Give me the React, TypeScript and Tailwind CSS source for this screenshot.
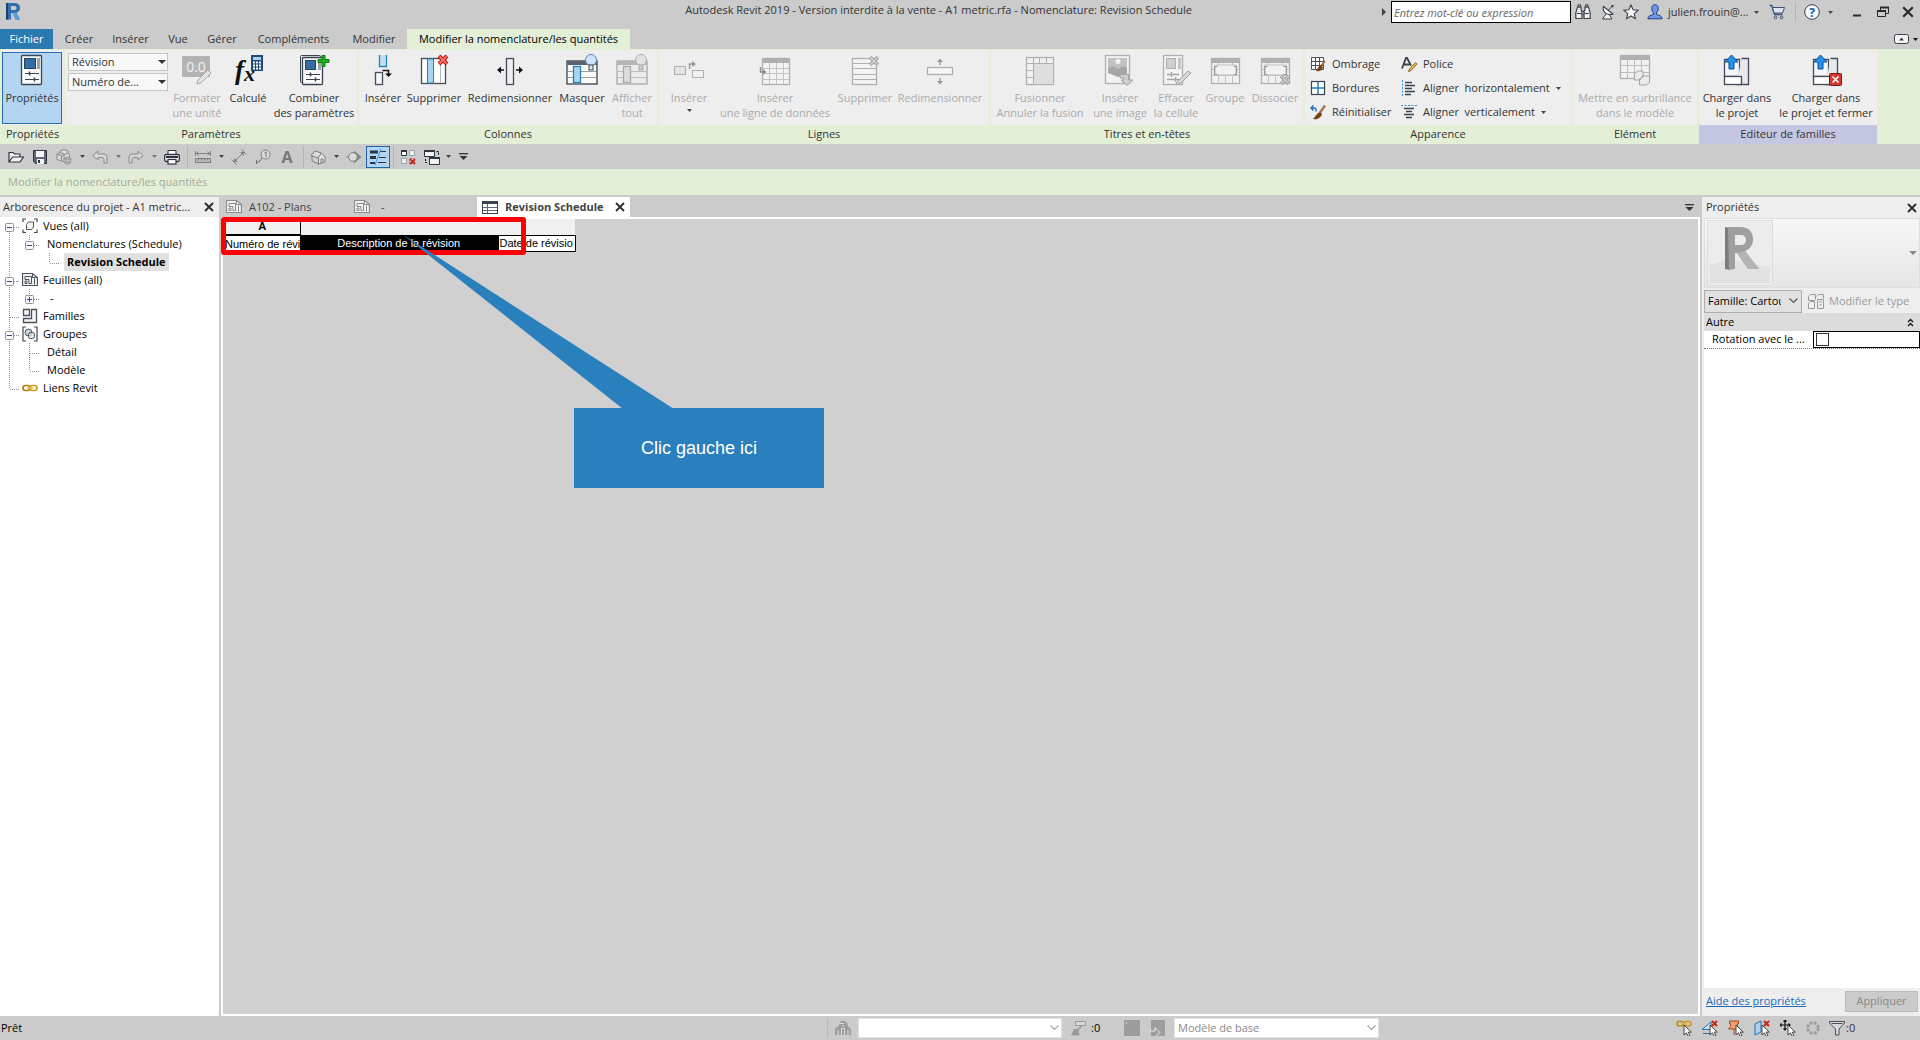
import React, { useState } from 'react';

type IconProps = { w?: number; h?: number; children: React.ReactNode };

const Svg = ({ w = 16, h = 16, children }: IconProps) => (
  <svg width={w} height={h} viewBox={`0 0 ${w} ${h}`} fill="none" className="shrink-0" aria-hidden="true">
    {children}
  </svg>
);

const Caret = ({ color = '#444' }: { color?: string }) => (
  <Svg w={5} h={3}>
    <path d="M0 0h5L2.5 3z" fill={color} />
  </Svg>
);

const Cross = ({ size = 10 }: { size?: number }) => (
  <svg width={size} height={size} viewBox="0 0 10 10" fill="none" className="shrink-0" aria-hidden="true">
    <path d="M1 1l8 8M9 1L1 9" stroke="#2b2b2b" strokeWidth="1.8" />
  </svg>
);

const Chevron = ({ color = '#555' }: { color?: string }) => (
  <Svg w={9} h={6}>
    <path d="M.5 .5l4 4 4-4" stroke={color} strokeWidth="1.2" />
  </Svg>
);

const CursorArrow = () => (
  <path d="M8 5v10l2.4-2.2 1.7 3.6 1.8-.9-1.7-3.4h3.1z" fill="#fff" stroke="#333" strokeWidth=".9" />
);

const RedX = ({ x = 10, y = 0 }: { x?: number; y?: number }) => (
  <path d={`M${x} ${y + 1}l5 5M${x + 5} ${y + 1}l-5 5`} stroke="#c9281c" strokeWidth="2" />
);

const RevitLogo = () => (
  <Svg w={16} h={20}>
    <path d="M1 1h3v16l-3 1z" fill="#1b3f66" />
    <path d="M3 1h6c4 0 6 2 6 5 0 2.500-1.500 4-3.500 4.600L15 18h-4l-3.500-7H6v6.500H3z" fill="#2f6fb0" />
    <path d="M6 4v4h2.500c2 0 3-.6 3-2s-1-2-3-2z" fill="#cbcbcb" />
    <path d="M7.500 11l3.500 7h4l-3.500-7.400z" fill="#58a3d4" />
  </Svg>
);

/* ---------- icônes du ruban ---------- */

const sheetPage = (
  <>
    <rect x="5.500" y="1.500" width="20" height="29" rx="1" fill="#fafafa" stroke="#3a4350" strokeWidth="1.300" />
    <rect x="8.500" y="4.500" width="11" height="10" fill="#356da3" stroke="#1f4468" />
    <rect x="21" y="4" width="3" height="11" fill="#9aa2aa" />
    <path d="M9 19.500h14M9 25.500h14" stroke="#3a4350" strokeWidth="1.200" />
    <path d="M13.500 17.500v4M18.500 23.500v4" stroke="#3a4350" strokeWidth="1.500" />
  </>
);

const IconProprietes = () => <Svg w={32} h={32}>{sheetPage}</Svg>;

const IconFormater = () => (
  <Svg w={32} h={32}>
    <rect x="1" y="2" width="28" height="21" fill="#b3b3b3" />
    <text x="15" y="18" fontSize="14" fill="#f2f2f2" textAnchor="middle" fontFamily="Open Sans">0.0</text>
    <path d="M17 26l10-10 3 3-10 10-4 1z" fill="#e3e3e3" stroke="#a9a9a9" />
  </Svg>
);

const IconCalcule = () => (
  <Svg w={32} h={32}>
    <text x="3" y="25" fontSize="27" fontStyle="italic" fontWeight="bold" fill="#111" fontFamily="Liberation Serif">f</text>
    <text x="12" y="27" fontSize="22" fontStyle="italic" fontWeight="bold" fill="#111" fontFamily="Liberation Serif">x</text>
    <rect x="19" y="1" width="12" height="16" fill="#1f4d78" />
    <rect x="21" y="3" width="8" height="3" fill="#a9d3ea" />
    <path d="M21 8.500h8M21 11.500h8M21 14.500h8" stroke="#fff" strokeWidth="2" strokeDasharray="2 1" />
  </Svg>
);

const IconCombiner = () => (
  <Svg w={32} h={32}>
    <rect x="2.500" y="1.500" width="20" height="27" rx="1" fill="#eee" stroke="#3a4350" />
    <rect x="4.500" y="3.500" width="20" height="27" rx="1" fill="#fafafa" stroke="#3a4350" strokeWidth="1.300" />
    <rect x="7.500" y="6.500" width="10" height="9" fill="#356da3" stroke="#1f4468" />
    <rect x="20" y="9" width="3" height="7" fill="#9aa2aa" />
    <path d="M8 20.500h14M8 25.500h14" stroke="#3a4350" strokeWidth="1.200" />
    <path d="M12.500 18.500v4M17.500 23.500v4" stroke="#3a4350" strokeWidth="1.500" />
    <path d="M24 1.500h3v4h4v3h-4v4h-3v-4h-4v-3h4z" fill="#19b11c" stroke="#0c7a10" />
  </Svg>
);

const IconInsererCol = () => (
  <Svg w={32} h={32}>
    <path d="M12.500 1v11h7V1z" fill="#bfe1f2" />
    <path d="M12.500 1v11.500h7V1" stroke="#2f7fb5" strokeWidth="1.300" />
    <rect x="8.500" y="18.500" width="7" height="12" fill="#f7f7f7" stroke="#444c57" strokeWidth="1.300" />
    <path d="M15.500 16.500h6v4" stroke="#111" strokeWidth="1.600" />
    <path d="M18 19.500h7L21.500 23z" fill="#111" />
  </Svg>
);

const IconSupprimerCol = () => (
  <Svg w={32} h={32}>
    <rect x="3.500" y="4.500" width="24" height="25" fill="#fff" stroke="#444c57" strokeWidth="1.300" />
    <path d="M22.500 5v24" stroke="#b5b9be" />
    <rect x="9.500" y="5" width="6" height="24" fill="#a9d6ef" stroke="#2f7fb5" />
    <path d="M21 2l8 8M29 2l-8 8" stroke="#a31a12" strokeWidth="4" />
    <path d="M21.500 2.500l7 7M28.500 2.500l-7 7" stroke="#ff6a5e" strokeWidth="2.400" />
  </Svg>
);

const IconRedimCol = () => (
  <Svg w={32} h={32}>
    <rect x="12.500" y="4.500" width="7" height="26" fill="#eef0f2" stroke="#444c57" strokeWidth="1.300" />
    <path d="M5 16h5M22 16h5" stroke="#111" strokeWidth="1.600" />
    <path d="M7 12.500v7L3 16zM25 12.500v7l4-3.500z" fill="#111" />
  </Svg>
);

const HideTable = ({ off = false }: { off?: boolean }) => {
  const line = off ? '#aaa' : '#39424e';
  return (
    <Svg w={32} h={32}>
      <rect x="1" y="7" width="30" height="23" fill={off ? '#ececec' : '#fafafa'} stroke={line} strokeWidth="1.300" />
      <rect x="1" y="7" width="30" height="4" fill={off ? '#b5b5b5' : '#5b6470'} />
      <path d="M2 17.500h28M2 23.500h28" stroke={off ? '#bdbdbd' : '#9aa1a9'} />
      <rect x="7.500" y="12.500" width="7" height="16" fill={off ? '#ddd' : '#a9d6ef'} stroke={off ? '#aaa' : '#2f7fb5'} strokeWidth="1.300" />
      <circle cx="25" cy="6" r="5.500" fill={off ? '#e2e2e2' : '#cfe3fb'} stroke={off ? '#b0b0b0' : '#5d86c0'} />
      <rect x="23" y="11" width="4" height="5" fill={off ? '#ccc' : '#e8e8e8'} stroke={off ? '#aaa' : '#39424e'} />
    </Svg>
  );
};

const G = '#b0b0b0';

const IconInsererLigne = () => (
  <Svg w={32} h={32}>
    <rect x="1.500" y="12.500" width="11" height="8" fill="#e3e3e3" stroke={G} />
    <rect x="19.500" y="16.500" width="11" height="7" fill="#f2f2f2" stroke={G} />
    <path d="M16.500 15v-5h4" stroke="#999" strokeWidth="1.400" />
    <path d="M19 7v6l4-3z" fill="#999" />
  </Svg>
);

const gridBody = (
  <>
    <rect x="3.500" y="4.500" width="27" height="26" fill="#f3f3f3" stroke={G} strokeWidth="1.300" />
    <rect x="3" y="5" width="28" height="4" fill={G} />
    <path d="M10.500 9v21M17.500 9v21M24.500 9v21M4 14.500h26M4 19.500h26M4 25.500h26" stroke="#c4c4c4" />
  </>
);

const IconInsererDonnees = () => (
  <Svg w={32} h={32}>
    {gridBody}
    <path d="M1.500 13v5h4" stroke="#8d8d8d" strokeWidth="1.400" />
    <path d="M4 15v6l3.500-3z" fill="#8d8d8d" />
  </Svg>
);

const IconSupprimerLigne = () => (
  <Svg w={32} h={32}>
    <rect x="3.500" y="4.500" width="24" height="26" fill="#f3f3f3" stroke={G} strokeWidth="1.300" />
    <path d="M4 9.500h23M4 14.500h23M4 20.500h23M4 25.500h23" stroke={G} />
    <path d="M21 3l8 8M29 3l-8 8" stroke="#a6a6a6" strokeWidth="3.600" />
    <path d="M21 3l8 8M29 3l-8 8" stroke="#d0d0d0" strokeWidth="1.500" />
  </Svg>
);

const IconRedimLigne = () => (
  <Svg w={32} h={32}>
    <rect x="3.500" y="13.500" width="25" height="7" fill="#f5f5f5" stroke={G} strokeWidth="1.300" />
    <path d="M16 6v5M16 24v5" stroke="#999" strokeWidth="1.400" />
    <path d="M13 8l3-3.500L19 8zM13 27l3 3.500 3-3.500z" fill="#999" />
  </Svg>
);

const IconFusionner = () => (
  <Svg w={32} h={32}>
    <rect x="2.500" y="3.500" width="27" height="27" fill="#f1f1f1" stroke={G} strokeWidth="1.300" />
    <rect x="9.500" y="9.500" width="20" height="21" fill="#dedede" stroke={G} />
    <path d="M9.500 4v6M15.500 4v6M22.500 4v6M3 9.500h7M3 16.500h7M3 23.500h7" stroke={G} />
  </Svg>
);

const IconImage = () => (
  <Svg w={32} h={32}>
    <rect x="1.500" y="1.500" width="24" height="28" fill="#f3f3f3" stroke={G} strokeWidth="1.300" />
    <rect x="4" y="4" width="19" height="11" fill="#c2c2c2" />
    <circle cx="14" cy="7.500" r="2.500" fill="#f3f3f3" />
    <path d="M4 14l5-2 5 3 5-3 4 2v6l-9 3-10-4z" fill="#a6a6a6" />
    <path d="M16 20.500h8.500V26H29l-6 5.500-6-5.500h3v-2h-4z" fill="#cfcfcf" stroke="#a3a3a3" />
  </Svg>
);

const IconEffacer = () => (
  <Svg w={32} h={32}>
    <rect x="3.500" y="1.500" width="19" height="29" fill="#f3f3f3" stroke={G} strokeWidth="1.300" />
    <rect x="6.500" y="4.500" width="9" height="10" fill="#cecece" stroke={G} />
    <rect x="18" y="4" width="3" height="11" fill="#c4c4c4" />
    <path d="M7 20.500h12M7 25.500h12M11.500 18v5M15.500 23v5" stroke="#a5a5a5" strokeWidth="1.300" />
    <path d="M17 28L28 17l3 2-10 10-5 2z" fill="#d9d9d9" stroke="#9f9f9f" />
  </Svg>
);

const groupBody = (
  <>
    <rect x="2.500" y="4.500" width="28" height="25" fill="#f1f1f1" stroke={G} strokeWidth="1.300" />
    <rect x="2" y="4" width="29" height="5" fill={G} />
    <path d="M3 15.500h27M3 21.500h27M9.500 9v20M23.500 9v20M16.500 20v9" stroke="#c4c4c4" />
    <rect x="6" y="11" width="21" height="10" fill="#f1f1f1" stroke="#c2c2c2" />
    <path d="M8.500 12.500h-3v8h3M24.500 12.500h3v8h-3" stroke="#999" strokeWidth="1.200" />
  </>
);

const IconGroupe = () => <Svg w={32} h={32}>{groupBody}</Svg>;

const IconDissocier = () => (
  <Svg w={32} h={32}>
    {groupBody}
    <path d="M22 22l8 8M30 22l-8 8" stroke="#9c9c9c" strokeWidth="3.600" />
    <path d="M22 22l8 8M30 22l-8 8" stroke="#cdcdcd" strokeWidth="1.500" />
  </Svg>
);

const IconSurbrillance = () => (
  <Svg w={32} h={32}>
    <rect x="1.500" y="1.500" width="29" height="23" fill="#f1f1f1" stroke={G} strokeWidth="1.300" />
    <rect x="1" y="1" width="30" height="5" fill={G} />
    <path d="M2 11.500h28M2 18.500h28M8.500 6v18M15.500 6v18M22.500 6v18" stroke="#bdbdbd" />
    <path d="M15.500 20l3-3h5.500v6l-3 3h-5.500zM20.500 25l3-3h7v6l-3 3h-7z" fill="#ececec" stroke="#a5a5a5" />
  </Svg>
);

const ChargerBody = (
  <>
    <path d="M3.500 5.500h15v17h-15z" fill="#f5f6f8" stroke="#444c57" strokeWidth="1.300" />
    <path d="M20.500 4.500h7v26h-12" stroke="#444c57" strokeWidth="1.300" fill="#e7e9ec" />
    <rect x="3.500" y="22.500" width="17" height="8" fill="#fdfdfd" stroke="#444c57" strokeWidth="1.300" />
    <path d="M10.500 1l6.500 7h-4v7H8V8H4z" fill="#2492ee" stroke="#0e4f93" />
  </>
);

const IconCharger = () => <Svg w={32} h={32}>{ChargerBody}</Svg>;

const IconChargerFermer = () => (
  <Svg w={32} h={32}>
    {ChargerBody}
    <rect x="19.500" y="19.500" width="12" height="12" rx="1" fill="#d23a32" stroke="#7c1712" />
    <path d="M22.500 22.500l6 6M28.500 22.500l-6 6" stroke="#fff" strokeWidth="1.500" />
  </Svg>
);

const IconOmbrage = () => (
  <Svg>
    <path d="M1.500 1.500h12v12h-12zM1.500 5.500h12M1.500 9.500h12M5.500 1.500v12M9.500 1.500v12" fill="#fff" stroke="#4c545e" />
    <path d="M15 5l-4 5" stroke="#b36a2c" strokeWidth="2" />
    <path d="M11 9c-3 1-3 4-5 6 3 1 6 0 7-4z" fill="#7a4316" />
  </Svg>
);

const IconBordures = () => (
  <Svg>
    <rect x="1.500" y="1.500" width="13" height="13" fill="#fff" stroke="#3a4350" strokeWidth="1.200" />
    <path d="M8 2v12M2 8h12" stroke="#1f7fc8" strokeWidth="1.500" />
  </Svg>
);

const IconReinit = () => (
  <Svg>
    <path d="M1 4h3c2 0 2.500 1.500 2 3.500M3.500 1.500L1 4l2.500 2.500" stroke="#1f6fc0" strokeWidth="1.400" />
    <path d="M15 1.500l-5 7" stroke="#a6744c" strokeWidth="2.400" />
    <path d="M10 8c-3 1-4 4-7 7 4 1 8-1 9-5z" fill="#7a4316" />
  </Svg>
);

const IconPolice = () => (
  <Svg>
    <path d="M1 12.500L5 2h1l4 7.500M2.500 8.500h6" stroke="#39424e" strokeWidth="1.800" />
    <path d="M14.500 6.500l-6 6.500-1 2.500 2.500-1 6-6.500z" fill="#f0b73a" stroke="#7a5214" strokeWidth=".8" />
  </Svg>
);

const IconAlignH = () => (
  <Svg>
    <path d="M1.500 0v16" stroke="#2f8fd8" strokeDasharray="2 1.500" />
    <path d="M4 2.500h7M4 5.500h10M4 8.500h7M4 11.500h10M4 14.500h6" stroke="#3a4350" strokeWidth="1.400" />
  </Svg>
);

const IconAlignV = () => (
  <Svg>
    <path d="M0 1.500h16" stroke="#2f8fd8" strokeDasharray="2 1.500" />
    <path d="M3 4.500h10M5 7.500h6M3 10.500h10M5 13.500h6" stroke="#3a4350" strokeWidth="1.400" />
  </Svg>
);

/* ---------- petites icônes ---------- */

const IconFeuille = ({ color = '#4a525c' }: { color?: string }) => (
  <Svg>
    <path d="M.5 1.500h10l5 4v8H.5z" fill="#f1f2f3" stroke={color} strokeWidth="1.200" />
    <path d="M10.500 1.500v4h5" stroke={color} />
    <path d="M3 4.500h6.500v7H7v-4H3zM3 9h2v2.500H3zM12.500 6.500v6" stroke={color} />
  </Svg>
);

const IconNomenclature = () => (
  <Svg w={16} h={13}>
    <rect x=".5" y=".5" width="15" height="12" fill="#fff" stroke="#3a4350" />
    <rect x="1" y="1" width="14" height="2" fill="#3a4350" />
    <path d="M1 6.500h14M1 9.500h14M5.500 3v9" stroke="#5b6b7c" />
  </Svg>
);

const IconVues = () => (
  <Svg>
    <path d="M4 1H1v3M12 1h3v3M4 14.500H1v-3M12 14.500h3v-3" stroke="#444" strokeWidth="1.200" />
    <path d="M4.500 6.500l2-2.500h5v5l-2 2.500h-5z" fill="#f4f4f4" stroke="#4a525c" />
  </Svg>
);

const IconFamilles = () => (
  <Svg>
    <path d="M1.500 1.500h6v6h-6zM9.500 1.500h5v13h-13v-4h8z" fill="#f5f5f5" stroke="#4a525c" strokeWidth="1.300" />
  </Svg>
);

const IconGroupes = () => (
  <Svg>
    <path d="M4 1H1v14h3M12 1h3v14h-3" stroke="#444" strokeWidth="1.200" />
    <circle cx="6.500" cy="6.500" r="3.500" fill="#cdd3da" stroke="#4a525c" />
    <rect x="6.500" y="6.500" width="6" height="6" rx="2" fill="#d9dee3" fillOpacity=".7" stroke="#4a525c" />
  </Svg>
);

const IconLien = () => (
  <Svg>
    <rect x="1" y="5.500" width="7" height="5" rx="2.500" stroke="#b07a08" strokeWidth="1.600" />
    <rect x="8" y="5.500" width="7" height="5" rx="2.500" stroke="#d39b1c" strokeWidth="1.600" />
    <path d="M5 8h6" stroke="#e6b93c" strokeWidth="1.500" />
  </Svg>
);

/* ---------- barre de titre ---------- */

const TitleBar = () => (
  <header className="flex h-[29px] items-start bg-[#cbcbcb]">
    <div className="pt-0.5 pl-[5px]">
      <RevitLogo />
    </div>
    <h1 className="min-w-0 flex-1 truncate pt-0.5 pr-[190px] text-right leading-4">
      Autodesk Revit 2019 - Version interdite à la vente - A1 metric.rfa - Nomenclature: Revision Schedule
    </h1>
    <div className="flex h-6 items-center">
      <button aria-label="Réduire la recherche" className="w-[9px]">
        <Svg w={4} h={8}>
          <path d="M0 0l4 4-4 4z" fill="#444" />
        </Svg>
      </button>
      <input
        aria-label="Recherche"
        placeholder="Entrez mot-clé ou expression"
        className="h-[22px] w-[180px] border border-black bg-white px-0.5 italic placeholder:text-[#666]"
      />
      <button aria-label="Rechercher" className="flex w-6 justify-center">
        <Svg>
          <path d="M2.500 3h3.500v3l1 1v7.500H.8V9zM13.500 3H10v3L9 7v7.500h6.200V9z" fill="#eee" stroke="#39424e" strokeWidth="1.200" />
          <path d="M3 .8h2.500v2H3zM10.500 .8H13v2h-2.500zM7 7.500h2v3H7z" fill="#ccc" stroke="#39424e" />
          <path d="M2 9.500h4M10 9.500h4" stroke="#39424e" />
        </Svg>
      </button>
      <button aria-label="Communication" className="flex w-[26px] justify-center">
        <Svg>
          <path d="M6 10l-3.500 5H12l-2.500-4" fill="#f3f3f3" stroke="#39424e" />
          <path d="M3.500 2.500c-1.500 5 3 9.500 9.500 7.500z" fill="#f3f3f3" stroke="#39424e" strokeWidth="1.200" />
          <path d="M8.500 6l4-4" stroke="#39424e" />
          <circle cx="12.500" cy="2" r="1.200" fill="#39424e" />
        </Svg>
      </button>
      <button aria-label="Favoris" className="flex w-5 justify-center">
        <Svg>
          <path d="M8 1l2.100 4.700 5 .5-3.800 3.400 1.100 5L8 12l-4.400 2.600 1.100-5L.9 6.200l5-.5z" fill="#f6f6f6" stroke="#39424e" strokeWidth="1.100" />
        </Svg>
      </button>
      <button className="flex w-[122px] items-center gap-[5px] pl-1.5">
        <Svg>
          <path d="M8 .7c2.700 0 3.500 2 3.200 4.500-.2 1.700-1 3-1.700 3.800v1.500c2 .7 5.500 1 5.700 4.300H.8c.2-3.300 3.700-3.600 5.700-4.300V9C5.800 8.200 5 6.900 4.800 5.200 4.500 2.700 5.300 .7 8 .7z" fill="#6f97e6" stroke="#263f86" />
        </Svg>
        <span className="whitespace-nowrap">julien.frouin@...</span>
        <Caret />
      </button>
      <button aria-label="Boutique" className="flex w-7 justify-center">
        <Svg>
          <path d="M.5 1.500h2.300l2.700 9h8" stroke="#3b4f7a" strokeWidth="1.300" />
          <path d="M3.500 3.500h12l-2 5.500H5z" fill="#dfe6f3" stroke="#3b4f7a" />
          <circle cx="6.500" cy="13.500" r="1.300" stroke="#3b4f7a" />
          <circle cx="12.500" cy="13.500" r="1.300" stroke="#3b4f7a" />
        </Svg>
      </button>
      <span className="mr-1 ml-1 h-5 w-px bg-[#b5b5b5]" />
      <button aria-label="Aide" className="flex w-[38px] items-center gap-2 pl-1">
        <Svg>
          <circle cx="8" cy="8" r="7.300" fill="#f4f7fb" stroke="#39424e" />
          <text x="8" y="12.500" textAnchor="middle" fontSize="12" fontWeight="bold" fontFamily="Open Sans" fill="#2259b5">?</text>
        </Svg>
        <Caret />
      </button>
      <button aria-label="Réduire" className="ml-1.5 flex w-[26px] justify-center">
        <Svg w={10} h={10}>
          <path d="M1 8.500h8" stroke="#2b2b2b" strokeWidth="2" />
        </Svg>
      </button>
      <button aria-label="Restaurer" className="flex w-[26px] justify-center">
        <Svg w={12} h={12}>
          <path d="M3.500 4V1.500h8v6H9M.5 5.500h8v5h-8z" stroke="#2b2b2b" />
          <path d="M3 1.500h9M0 5h9" stroke="#2b2b2b" strokeWidth="2" />
        </Svg>
      </button>
      <button aria-label="Fermer" className="flex w-6 justify-center">
        <Cross size={12} />
      </button>
    </div>
  </header>
);

const onglets = [
  { label: 'Créer', cls: 'w-[48px]' },
  { label: 'Insérer', cls: 'w-[55px]' },
  { label: 'Vue', cls: 'w-[40px]' },
  { label: 'Gérer', cls: 'w-[48px]' },
  { label: 'Compléments', cls: 'w-[95px]' },
  { label: 'Modifier', cls: 'w-[66px]' },
];

const TabBar = () => (
  <nav className="flex h-5 items-stretch bg-[#cbcbcb]">
    <button className="mr-0.5 w-[53px] bg-[#2a7ab0] text-white">Fichier</button>
    {onglets.map((o) => (
      <button key={o.label} className={o.cls}>{o.label}</button>
    ))}
    <button className="w-[223px] bg-[#e4efd8] whitespace-nowrap text-black">Modifier la nomenclature/les quantités</button>
    <button aria-label="Réduire le ruban" className="ml-auto flex items-center gap-1 pr-0.5">
      <Svg w={15} h={10}>
        <rect x=".5" y=".5" width="14" height="9" rx="2" fill="#f4f4f4" stroke="#39424e" />
        <path d="M5 6.500h5L7.500 3.500z" fill="#39424e" />
      </Svg>
      <Caret color="#111" />
    </button>
  </nav>
);

/* ---------- ruban ---------- */

type RibbonButtonProps = {
  icon: React.ReactNode;
  label: string;
  label2?: string;
  cls: string;
  disabled?: boolean;
  menu?: boolean;
};

const RibbonButton = ({ icon, label, label2, cls, disabled, menu }: RibbonButtonProps) => (
  <button
    disabled={disabled}
    className={`flex shrink-0 flex-col items-center pt-1 leading-[15px] whitespace-nowrap ${cls} ${disabled ? 'text-[#ababab]' : 'text-[#333]'}`}
  >
    {icon}
    <span className="mt-1">{label}</span>
    {label2 && <span>{label2}</span>}
    {menu && <span className="pt-1"><Caret /></span>}
  </button>
);

const Panel = ({ title, cls, titleCls = 'bg-[#e4efd8]', children }: { title: string; cls: string; titleCls?: string; children: React.ReactNode }) => (
  <section className={`mr-0.5 flex shrink-0 flex-col ${cls}`}>
    <div className="flex h-[75px] bg-[#eee]">{children}</div>
    <h2 className={`h-[19px] text-center leading-[17px] ${titleCls}`}>{title}</h2>
  </section>
);

const RibbonSelect = ({ label, value }: { label: string; value: string }) => (
  <div className="relative">
    <select aria-label={label} className="h-[18px] w-full appearance-none border border-[#c6c6c6] bg-[#f8f8f8] pl-[3px] leading-4">
      <option>{value}</option>
    </select>
    <span className="pointer-events-none absolute top-[7px] right-0.5">
      <Svg w={8} h={4}>
        <path d="M0 0h8L4 4z" fill="#333" />
      </Svg>
    </span>
  </div>
);

const SmallButton = ({ icon, label, menu }: { icon: React.ReactNode; label: string; menu?: boolean }) => (
  <button className="flex h-6 items-center gap-1.5 whitespace-nowrap">
    {icon}
    <span className="whitespace-pre">{label}</span>
    {menu && <Caret />}
  </button>
);

const Ribbon = () => (
  <div className="flex h-[95px] overflow-hidden border-t border-[#e4efd8] bg-[#e4efd8] pl-0.5 text-[#333]">
    <Panel title="Propriétés" cls="w-[61px]">
      <button className="mr-px mt-0.5 flex h-[72px] flex-1 flex-col items-center border border-[#2a6fb5] bg-[#b4d5f2] pt-px leading-[15px]">
        <IconProprietes />
        <span className="mt-1">Propriétés</span>
      </button>
    </Panel>
    <Panel title="Paramètres" cls="w-[292px]">
      <div className="ml-[3px] flex w-[100px] flex-col gap-0.5 pt-[3px]">
        <RibbonSelect label="Catégorie" value="Révision" />
        <RibbonSelect label="Champ" value="Numéro de..." />
      </div>
      <RibbonButton disabled icon={<IconFormater />} label="Formater" label2="une unité" cls="ml-[3px] w-[52px]" />
      <RibbonButton icon={<IconCalcule />} label="Calculé" cls="w-[50px]" />
      <RibbonButton icon={<IconCombiner />} label="Combiner" label2="des paramètres" cls="w-[82px]" />
    </Panel>
    <Panel title="Colonnes" cls="w-[298px]">
      <RibbonButton icon={<IconInsererCol />} label="Insérer" cls="ml-1 w-[40px]" />
      <RibbonButton icon={<IconSupprimerCol />} label="Supprimer" cls="w-[62px]" />
      <RibbonButton icon={<IconRedimCol />} label="Redimensionner" cls="w-[90px]" />
      <RibbonButton icon={<HideTable />} label="Masquer" cls="w-[54px]" />
      <RibbonButton disabled icon={<HideTable off />} label="Afficher" label2="tout" cls="w-[46px]" />
    </Panel>
    <Panel title="Lignes" cls="w-[330px]">
      <RibbonButton disabled menu icon={<IconInsererLigne />} label="Insérer" cls="ml-[7px] w-[46px]" />
      <RibbonButton disabled icon={<IconInsererDonnees />} label="Insérer" label2="une ligne de données" cls="w-[126px]" />
      <RibbonButton disabled icon={<IconSupprimerLigne />} label="Supprimer" cls="w-[54px]" />
      <RibbonButton disabled icon={<IconRedimLigne />} label="Redimensionner" cls="w-[96px]" />
    </Panel>
    <Panel title="Titres et en-têtes" cls="w-[312px]">
      <RibbonButton disabled icon={<IconFusionner />} label="Fusionner" label2="Annuler la fusion" cls="w-[98px]" />
      <RibbonButton disabled icon={<IconImage />} label="Insérer" label2="une image" cls="w-[62px]" />
      <RibbonButton disabled icon={<IconEffacer />} label="Effacer" label2="la cellule" cls="w-[50px]" />
      <RibbonButton disabled icon={<IconGroupe />} label="Groupe" cls="w-[48px]" />
      <RibbonButton disabled icon={<IconDissocier />} label="Dissocier" cls="w-[52px]" />
    </Panel>
    <Panel title="Apparence" cls="w-[266px]">
      <div className="flex w-[90px] flex-col pt-0.5 pl-[5px]">
        <SmallButton icon={<IconOmbrage />} label="Ombrage" />
        <SmallButton icon={<IconBordures />} label="Bordures" />
        <SmallButton icon={<IconReinit />} label="Réinitialiser" />
      </div>
      <div className="flex flex-col pt-0.5 pl-1.5">
        <SmallButton icon={<IconPolice />} label="Police" />
        <SmallButton menu icon={<IconAlignH />} label="Aligner  horizontalement" />
        <SmallButton menu icon={<IconAlignV />} label="Aligner  verticalement" />
      </div>
    </Panel>
    <Panel title="Elément" cls="w-[124px]">
      <RibbonButton disabled icon={<IconSurbrillance />} label="Mettre en surbrillance" label2="dans le modèle" cls="w-[124px]" />
    </Panel>
    <Panel title="Editeur de familles" cls="w-[178px]" titleCls="bg-[#c5c6e2]">
      <RibbonButton icon={<IconCharger />} label="Charger dans" label2="le projet" cls="w-[76px]" />
      <RibbonButton icon={<IconChargerFermer />} label="Charger dans" label2="le projet et fermer" cls="w-[102px]" />
    </Panel>
  </div>
);

/* ---------- barre d'accès rapide ---------- */

const Tool = ({ label, cls = 'w-6', children }: { label: string; cls?: string; children: React.ReactNode }) => (
  <button aria-label={label} title={label} className={`flex h-[22px] shrink-0 items-center justify-center ${cls}`}>
    {children}
  </button>
);

const Sep = () => <span className="h-[22px] w-px shrink-0 bg-[#b3b3b3]" />;

const QuickAccess = () => (
  <div className="flex h-[25px] items-center bg-[#cbcbcb] pl-1">
    <Tool label="Ouvrir">
      <Svg>
        <path d="M1 13V3.500h4l1.500 1.500H12v3M1 13L4.500 8H15.500L12 13z" fill="#f3f3f3" stroke="#2d3540" strokeWidth="1.200" />
      </Svg>
    </Tool>
    <Tool label="Enregistrer">
      <Svg>
        <path d="M1.500 1.500h13v13h-11l-2-2z" fill="#5d6773" stroke="#2d3540" />
        <rect x="4" y="2" width="8" height="6" fill="#f5f5f5" />
        <rect x="5" y="10" width="7" height="5" fill="#f5f5f5" />
        <rect x="6" y="11" width="2" height="3" fill="#2d3540" />
      </Svg>
    </Tool>
    <Tool label="Synchroniser">
      <Svg>
        <path d="M1 5l3-1.500V2l4-1.500 4 1.500v2l1.500 1v5l-5 3-2.500-1L1 10.500zM1 5l4.500 2L12 4M5.500 7v5M8 6v6M4 3.500l4 1.500" fill="#d9d9d9" stroke="#8c8c8c" />
        <circle cx="11.500" cy="11.500" r="4" fill="#9f9f9f" />
        <path d="M8 11.500h7M11.500 8v7" stroke="#c4c4c4" strokeWidth=".8" />
      </Svg>
    </Tool>
    <Tool label="Options de synchronisation" cls="w-3"><Caret /></Tool>
    <Tool label="Annuler">
      <Svg>
        <path d="M.8 6.500L6 2v3h5c3 0 4 1 4 4v5h-3v-3c0-1.500-.5-2.500-2-2.500H6v2.500z" fill="#d6d6d6" stroke="#8c8c8c" />
      </Svg>
    </Tool>
    <Tool label="Liste des annulations" cls="w-3"><Caret color="#777" /></Tool>
    <Tool label="Rétablir">
      <Svg>
        <path d="M15.200 6.500L10 2v3H5C2 5 1 6 1 9v5h3v-3c0-1.500.5-2.500 2-2.500h4v2.500z" fill="#d6d6d6" stroke="#8c8c8c" />
      </Svg>
    </Tool>
    <Tool label="Liste des rétablissements" cls="w-3"><Caret color="#777" /></Tool>
    <Tool label="Imprimer">
      <Svg>
        <path d="M4 6V1.500h8V6" fill="#fff" stroke="#2d3540" />
        <rect x=".7" y="5.500" width="14.600" height="7" rx="1.500" fill="#f0f0f0" stroke="#2d3540" strokeWidth="1.300" />
        <path d="M2 8h12" stroke="#2d3540" strokeWidth="2" />
        <rect x="4" y="10.500" width="8" height="4.500" fill="#fff" stroke="#2d3540" strokeWidth="1.200" />
      </Svg>
    </Tool>
    <span className="w-[3px]" />
    <Sep />
    <Tool label="Mesurer" cls="ml-[3px] w-6">
      <Svg>
        <path d="M1 4.500h14M3.500 2.500l-2 2 2 2M12.500 2.500l2 2-2 2M.5 2v5M15.500 2v5" stroke="#7f7f7f" />
        <path d="M.5 9.500h15v4H.5z" fill="#b9b9b9" stroke="#7f7f7f" />
        <path d="M3.500 9.500v2M6.500 9.500v2M9.500 9.500v2M12.500 9.500v2" stroke="#7f7f7f" />
      </Svg>
    </Tool>
    <Tool label="Options de mesure" cls="w-3"><Caret /></Tool>
    <Tool label="Cote alignée">
      <Svg>
        <path d="M3.500 12.500l9-9M.5 10.500l5 5M10.500 .5l5 5" stroke="#808080" />
        <path d="M3 9v4h4zM13 7V3H9z" fill="#808080" />
      </Svg>
    </Tool>
    <Tool label="Étiquette">
      <Svg>
        <circle cx="10.500" cy="5.500" r="4.500" fill="#d9d9d9" stroke="#808080" />
        <path d="M7 9l-3 4H1M1.500 11v4M9.500 4l1.500-1v5" stroke="#707070" />
      </Svg>
    </Tool>
    <Tool label="Texte">
      <span className="text-base leading-5 font-bold text-[#777]">A</span>
    </Tool>
    <span className="w-1" />
    <Sep />
    <Tool label="Vue 3D par défaut" cls="ml-0.5 w-6">
      <Svg>
        <path d="M2 6v6l6.500 3V8.500z" fill="#d0d0d0" stroke="#7c7c7c" />
        <path d="M1 6.500L5 2l6.500 2L8.500 9z" fill="#dcdcdc" stroke="#7c7c7c" />
        <path d="M8.500 8.500l3-4.500L15 8v5l-6.500 2z" fill="#e4e4e4" stroke="#7c7c7c" />
        <path d="M11 14v-4h2v3.500" stroke="#7c7c7c" />
      </Svg>
    </Tool>
    <Tool label="Options de vue 3D" cls="w-3"><Caret /></Tool>
    <Tool label="Coupe">
      <Svg>
        <path d="M8 1.500L15.500 8 8 14.500z" fill="#858585" />
        <circle cx="7" cy="8" r="4.300" fill="#dcdcdc" stroke="#7c7c7c" />
        <path d="M.5 8h2" stroke="#7c7c7c" />
      </Svg>
    </Tool>
    <Tool label="Lignes fines" cls="w-6 border border-[#1f64a8] bg-[#b4d5f2]">
      <Svg w={18} h={16}>
        <path d="M1 3h8M1 8.500h6" stroke="#2d3540" strokeWidth="3" />
        <path d="M1 14h5" stroke="#2d3540" strokeWidth="2" />
        <path d="M11 2.500h6M10 8.500h7M9 13.500h8" stroke="#2d3540" strokeWidth="1.200" />
        <path d="M12 0L6 16" stroke="#2f8fe8" />
      </Svg>
    </Tool>
    <span className="w-[3px]" />
    <Sep />
    <Tool label="Fermer les fenêtres cachées" cls="ml-0.5 w-6">
      <Svg>
        <path d="M1.500 1.500h5v5h-5z" fill="#fff" stroke="#2d3540" />
        <path d="M9.500 1.500h5v5h-5zM1.500 9.500h5v5h-5zM9.500 9.500h5v5h-5z" fill="#f1f1f1" stroke="#9aa0a8" />
        <path d="M1 2h6" stroke="#2d3540" strokeWidth="2" />
        <RedX x={10} y={9} />
      </Svg>
    </Tool>
    <Tool label="Changer de fenêtre">
      <Svg>
        <path d="M.5 1.500h10v6H.5zM5.500 8.500h10v7h-10z" fill="#f4f4f4" stroke="#2d3540" />
        <path d="M.5 2h10M5.500 9h10" stroke="#2d3540" strokeWidth="2" />
        <path d="M12.500 2.500h2v4M1.500 10v3.500h2.500" stroke="#111" strokeDasharray="2 1" />
      </Svg>
    </Tool>
    <Tool label="Liste des fenêtres" cls="w-2"><Caret /></Tool>
    <Tool label="Personnaliser la barre" cls="w-[22px]">
      <Svg w={9} h={7}>
        <path d="M0 .7h9" stroke="#333" strokeWidth="1.300" />
        <path d="M.5 3h8l-4 4z" fill="#333" />
      </Svg>
    </Tool>
  </div>
);

/* ---------- arborescence ---------- */

type GuideProps = { up?: boolean; down?: boolean; right?: boolean; box?: '+' | '-' };

const Guide = ({ up, down, right, box }: GuideProps) => (
  <Svg w={20} h={18}>
    {up && <path d="M9.500 0v10" stroke="#8f8f8f" strokeDasharray="1 1" />}
    {down && <path d="M9.500 10v8" stroke="#8f8f8f" strokeDasharray="1 1" />}
    {right && <path d="M10 10.500h10" stroke="#8f8f8f" strokeDasharray="1 1" />}
    {box && <rect x="5.500" y="6.500" width="8" height="8" rx="1" fill="#fafafa" stroke="#919191" />}
    {box && <path d="M7 10.500h5" stroke="#2b4a87" />}
    {box === '+' && <path d="M9.500 8v5" stroke="#2b4a87" />}
  </Svg>
);

const arbre: { label: string; guides: GuideProps[]; icon?: React.ReactNode; selected?: boolean }[] = [
  { label: 'Vues (all)', guides: [{ down: true, right: true, box: '-' }], icon: <IconVues /> },
  { label: 'Nomenclatures (Schedule)', guides: [{ up: true, down: true }, { up: true, right: true, box: '-' }] },
  { label: 'Revision Schedule', guides: [{ up: true, down: true }, {}, { up: true, right: true }], selected: true },
  { label: 'Feuilles (all)', guides: [{ up: true, down: true, right: true, box: '-' }], icon: <IconFeuille /> },
  { label: '-', guides: [{ up: true, down: true }, { up: true, right: true, box: '+' }] },
  { label: 'Familles', guides: [{ up: true, down: true, right: true }], icon: <IconFamilles /> },
  { label: 'Groupes', guides: [{ up: true, down: true, right: true, box: '-' }], icon: <IconGroupes /> },
  { label: 'Détail', guides: [{ up: true, down: true }, { up: true, down: true, right: true }] },
  { label: 'Modèle', guides: [{ up: true, down: true }, { up: true, right: true }] },
  { label: 'Liens Revit', guides: [{ up: true, right: true }], icon: <IconLien /> },
];

const ProjectBrowser = () => (
  <aside className="flex w-[219px] shrink-0 flex-col bg-white">
    <div className="flex h-5 items-center justify-between bg-[#eee] pr-[5px] pl-[3px]">
      <span className="text-[#333]">Arborescence du projet - A1 metric...</span>
      <button aria-label="Fermer l'arborescence"><Cross /></button>
    </div>
    <ul className="flex-1">
      {arbre.map((n, i) => (
        <li key={i} className="flex h-[18px] items-center">
          {n.guides.map((g, j) => (
            <Guide key={j} {...g} />
          ))}
          {n.icon && <span className="mr-[5px] ml-0.5">{n.icon}</span>}
          {n.selected ? (
            <span className="ml-1 bg-[#e0e0e0] px-[3px] leading-[18px] font-bold text-black">{n.label}</span>
          ) : (
            <span className={n.icon ? 'text-black' : n.label === '-' ? 'pl-2.5 text-black' : 'pl-[7px] text-black'}>{n.label}</span>
          )}
        </li>
      ))}
    </ul>
  </aside>
);

/* ---------- zone de dessin ---------- */

const DocTabs = () => (
  <div className="flex h-5 items-center text-[#444]">
    <button className="flex h-full w-[133px] items-center gap-[7px] pl-[5px]">
      <IconFeuille color="#8b8b8b" />
      A102 - Plans
    </button>
    <button className="flex h-full w-[123px] items-center gap-[11px]">
      <IconFeuille color="#8b8b8b" />
      -
    </button>
    <div className="flex h-full w-[153px] items-center bg-white pl-[5px] font-bold">
      <button className="flex items-center gap-[7px] whitespace-nowrap">
        <IconNomenclature />
        Revision Schedule
      </button>
      <button aria-label="Fermer l'onglet" className="mr-[5px] ml-auto"><Cross /></button>
    </div>
    <button aria-label="Liste des onglets" className="mr-1.5 ml-auto">
      <Svg w={9} h={7}>
        <path d="M0 .7h9" stroke="#333" strokeWidth="1.300" />
        <path d="M.5 3h8l-4 4z" fill="#333" />
      </Svg>
    </button>
  </div>
);

const ScheduleView = () => (
  <main className="flex min-w-0 flex-1 flex-col pr-0.5 pl-0.5">
    <DocTabs />
    <div className="relative flex-1 border-2 border-white bg-[#d0d0d0]">
      <table className="ml-0.5 w-[350px] table-fixed border-collapse font-['Liberation_Sans',Arial,sans-serif] text-[11px] leading-[14px] text-black">
        <colgroup>
          <col className="w-[75px]" />
          <col className="w-[198px]" />
          <col className="w-[77px]" />
        </colgroup>
        <thead>
          <tr className="h-4 bg-[#f0f0f0]">
            <th className="border-r border-b-2 border-black p-0 align-top font-bold">A</th>
            <th className="p-0" />
            <th className="p-0" />
          </tr>
        </thead>
        <tbody>
          <tr className="h-4">
            <td className="bg-white p-0 whitespace-nowrap">Numéro de révi</td>
            <td className="bg-black p-0 text-center text-white">Description de la révision</td>
            <td className="border border-black bg-white p-0 pl-px whitespace-nowrap">Date de révisio</td>
          </tr>
        </tbody>
      </table>

      {/* repères posés par-dessus la vue */}
      <div className="absolute -top-0.5 -left-0.5 h-[38px] w-[305px] rounded-[3px] border-[5px] border-[#f00]" />
      <svg className="absolute top-[15px] left-[179px]" width="272" height="175" viewBox="0 0 272 175" aria-hidden="true">
        <path d="M0 0l221 175h51z" fill="#2a80bc" />
      </svg>
      <div className="absolute top-[189px] left-[351px] flex h-20 w-[250px] items-center justify-center bg-[#2a80bc] font-['Liberation_Sans',Arial,sans-serif] text-lg text-white">
        Clic gauche ici
      </div>
    </div>
  </main>
);

/* ---------- palette des propriétés ---------- */

const PropertiesPalette = () => {
  const [rotation, setRotation] = useState(false);

  return (
    <aside className="flex w-[218px] shrink-0 flex-col bg-[#eee] pl-0.5 text-[#333]">
      <div className="flex h-[21px] items-center justify-between pr-[3px] pl-0.5">
        <span>Propriétés</span>
        <button aria-label="Fermer les propriétés"><Cross /></button>
      </div>
      <div className="flex h-[70px] items-center justify-between border border-[#dedede] bg-linear-to-b from-[#f7f7f7] to-[#e6e6e6] px-0.5">
        <div className="flex h-[66px] w-[66px] items-center justify-center border border-[#dcdcdc] bg-[#ececec]">
          <Svg w={60} h={60}>
            <path d="M0 42l18-6 42 8v16H0z" fill="#e2e2e2" />
            <path d="M15 4l5 1v42l-5-1z" fill="#7d7d7d" />
            <path d="M18 4h12c9 0 13 5 13 12 0 6-3 10-8 12l14 18H38L27 30h-2v16l-6 1z" fill="#9f9f9f" />
            <path d="M25 12v10h5c4 0 6-2 6-5s-2-5-6-5z" fill="#ededed" />
            <path d="M27 30l11 16h11L35 28z" fill="#b4b4b4" />
          </Svg>
        </div>
        <Svg w={8} h={4}>
          <path d="M0 0h8L4 4z" fill="#888" />
        </Svg>
      </div>
      <div className="mt-px flex h-6 items-center">
        <div className="relative">
          <select aria-label="Type de famille" className="h-[23px] w-[98px] appearance-none overflow-hidden border border-[#adadad] bg-[#e1e1e1] pr-5 pl-[3px] text-black">
            <option>Famille: Cartouches</option>
          </select>
          <span className="pointer-events-none absolute top-2 right-1 leading-none"><Chevron /></span>
        </div>
        <button disabled className="ml-1.5 flex items-center gap-[5px] whitespace-nowrap text-[#9b9b9b]">
          <Svg>
            <path d="M.5 3.500l2-2h5v5l-1 1h-6zM8.500 3.500l2-2h5v4M.5 10.500l2-2h4v7h-6zM9.500 6.500h6v9h-6zM11 9h3M11 12h3" fill="#eee" stroke="#9b9b9b" />
          </Svg>
          Modifier le type
        </button>
      </div>
      <div className="flex h-[18px] items-center justify-between bg-[#dcdcdc] pr-1.5 pl-0.5 text-black">
        <span>Autre</span>
        <Svg w={7} h={9}>
          <path d="M1 4l2.500-2.500L6 4M1 8l2.500-2.500L6 8" stroke="#111" strokeWidth="1.300" />
        </Svg>
      </div>
      <div className="flex h-[18px] items-center border-b border-dotted border-[#777] bg-white text-black">
        <label htmlFor="rotation" className="w-[109px] pl-2 whitespace-nowrap">Rotation avec le ...</label>
        <div className="flex h-[17px] flex-1 items-center border border-black pl-0.5">
          <input
            id="rotation"
            type="checkbox"
            checked={rotation}
            onChange={(e) => setRotation(e.target.checked)}
            className="size-[13px] appearance-none border border-[#333] bg-white checked:bg-[#333]"
          />
        </div>
      </div>
      <div className="flex-1 bg-white" />
      <div className="flex h-7 items-center justify-between pr-0.5 pb-0.5 pl-0.5">
        <a href="#aide" className="text-[#1a6ab8] underline">Aide des propriétés</a>
        <button disabled className="h-[21px] w-[73px] border border-[#bcbcbc] bg-[#cbcbcb] text-[#888]">Appliquer</button>
      </div>
    </aside>
  );
};

/* ---------- barre d'état ---------- */

const StatusSelect = ({ label, value, cls }: { label: string; value: string; cls: string }) => (
  <div className={`relative ${cls}`}>
    <select disabled aria-label={label} className="h-5 w-full appearance-none border border-[#e2e2e2] bg-white pl-[3px] text-[#8a8a8a] opacity-100">
      <option>{value}</option>
    </select>
    <span className="pointer-events-none absolute top-[7px] right-[3px]"><Chevron color="#a5a5a5" /></span>
  </div>
);

const StatusBar = () => (
  <footer className="flex h-6 items-center bg-[#cbcbcb] pl-px">
    <span className="w-[826px] text-black">Prêt</span>
    <span className="h-5 w-px bg-[#bababa]" />
    <Tool label="Sous-projets" cls="mx-[3px] w-6">
      <Svg>
        <path d="M4 4.500L6 1h4l2.500 2.500V8H4z" fill="#9d9d9d" />
        <path d="M0 15V9l3-3 3.500 2v7zM9 15V8l3-2.500L16 9v6zM6 9h3v6H6z" fill="#9d9d9d" />
        <path d="M3 10v5M6.500 8v7M9.500 8v7M13 10v5M5 3.500h4M8 5v2" stroke="#eee" strokeWidth=".8" />
      </Svg>
    </Tool>
    <StatusSelect label="Sous-projet actif" value="" cls="w-[204px]" />
    <button className="ml-[9px] flex w-[49px] items-center gap-1 text-black">
      <Svg>
        <path d="M4.500 1.500h10v4h-10z" fill="#d9d9d9" stroke="#999" />
        <path d="M10.500 6L7 10" stroke="#999" strokeWidth="1.500" />
        <path d="M0 15.500L3 9h4l1.500 6.500z" fill="#999" />
      </Svg>
      :0
    </button>
    <Tool label="Variantes">
      <Svg>
        <rect x="0" y="0" width="16" height="16" rx="1" fill="#9d9d9d" />
        <path d="M2 3h1" stroke="#eee" />
      </Svg>
    </Tool>
    <Tool label="Sélectionner la variante" cls="mr-1 ml-0.5 w-6">
      <Svg>
        <path d="M1 0h14v16H1z" fill="#9d9d9d" />
        <path d="M0 11h5V7.500l5 5-4 3.500" fill="#9d9d9d" stroke="#eee" />
      </Svg>
    </Tool>
    <StatusSelect label="Variante active" value="Modèle de base" cls="w-[205px]" />
    <div className="ml-auto flex items-center pr-[53px]">
      <Tool label="Sélectionner les liens" cls="w-[26px]">
        <Svg>
          <rect x="1" y="1.500" width="6.500" height="4.500" rx="2.200" stroke="#c08a10" strokeWidth="1.500" />
          <rect x="8.500" y="1.500" width="6.500" height="4.500" rx="2.200" stroke="#d39b1c" strokeWidth="1.500" />
          <path d="M5 3.700h6" stroke="#e6b93c" strokeWidth="1.300" />
          <CursorArrow />
        </Svg>
      </Tool>
      <Tool label="Sélectionner les éléments du fond de plan" cls="w-[26px]">
        <Svg>
          <path d="M0 9.500L9 2v7.500zM1 13.500h8" fill="#cfe3f5" stroke="#2f6fb0" />
          <RedX x={10} y={0} />
          <CursorArrow />
        </Svg>
      </Tool>
      <Tool label="Sélectionner les éléments verrouillés" cls="w-[26px]">
        <Svg>
          <path d="M1.500 1h9v2.500h-1v3l2 2.500H.5l2-2.500v-3h-1zM6 9v6" fill="#f0a070" stroke="#a34a18" />
          <CursorArrow />
        </Svg>
      </Tool>
      <Tool label="Sélectionner par face" cls="w-[26px]">
        <Svg>
          <path d="M1 4l6-3v11l-6 3z" fill="#a9d3ea" stroke="#2f6fb0" />
          <RedX x={10} y={0} />
          <CursorArrow />
        </Svg>
      </Tool>
      <Tool label="Faire glisser à la sélection" cls="w-[26px]">
        <Svg>
          <path d="M5 0v10M0 5h10M3.500 1.500L5 0l1.500 1.500M3.500 8.500L5 10l1.500-1.500M1.500 3.500L0 5l1.500 1.500M8.500 3.500L10 5 8.500 6.500" stroke="#111" strokeWidth="1.200" />
          <CursorArrow />
        </Svg>
      </Tool>
      <Tool label="Processus en arrière-plan" cls="w-6">
        <Svg>
          <circle cx="8" cy="8" r="5.300" stroke="#a0a0a0" strokeWidth="3" strokeDasharray="3 1.160" />
        </Svg>
      </Tool>
      <button className="flex w-[42px] items-center gap-px pl-1 text-[#333]">
        <Svg>
          <path d="M.5 1.500h15v1.500L10 9v6H6.500V9L.5 3z" fill="#d5d9de" stroke="#4a525c" />
          <path d="M2.500 3.500h11" stroke="#4a525c" />
        </Svg>
        :0
      </button>
    </div>
  </footer>
);

export default function App() {
  return (
    <div className="flex h-screen flex-col overflow-hidden bg-[#cbcbcb] font-['Open_Sans','Noto_Sans',sans-serif] text-[11px] text-[#333] select-none">
      <TitleBar />
      <TabBar />
      <Ribbon />
      <QuickAccess />
      <div className="flex h-[26px] items-center bg-[#e4efd8] pl-2 text-[#a3aa9c]">Modifier la nomenclature/les quantités</div>
      <div className="flex min-h-0 flex-1 pt-0.5">
        <ProjectBrowser />
        <ScheduleView />
        <PropertiesPalette />
      </div>
      <StatusBar />
    </div>
  );
}
